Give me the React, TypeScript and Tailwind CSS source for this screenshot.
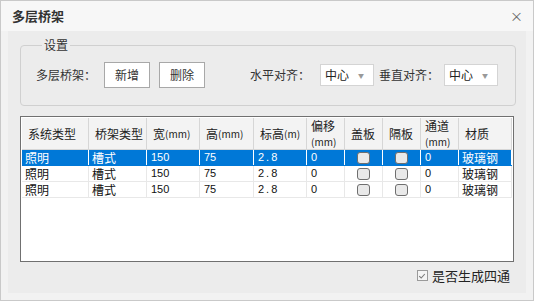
import React from "react"

const font = { fontFamily: '"Noto Sans CJK SC", "Noto Sans", sans-serif' }

type Row = { sys: string; tray: string; w: string; h: string; elev: string; offset: string; ch: string; mat: string }

const rows: Row[] = [
  { sys: "照明", tray: "槽式", w: "150", h: "75", elev: "2.8", offset: "0", ch: "0", mat: "玻璃钢" },
  { sys: "照明", tray: "槽式", w: "150", h: "75", elev: "2.8", offset: "0", ch: "0", mat: "玻璃钢" },
  { sys: "照明", tray: "槽式", w: "150", h: "75", elev: "2.8", offset: "0", ch: "0", mat: "玻璃钢" },
]

const widths = ["w-[67px]", "w-[58px]", "w-[53px]", "w-[54px]", "w-[53px]", "w-[38px]", "w-[38px]", "w-[38px]", "w-[38px]", "w-[53px]"]

function Mm() {
  return <span className="text-[10px]">(mm)</span>
}

function CellBox() {
  return <span className="block w-[13px] h-[12px] rounded-[3px] border border-[#6e6e6e] bg-[#e9e9e9]" />
}

function Dropdown() {
  return (
    <div className="w-[54px] h-[22px] bg-white border border-[#d4d4d4] flex items-center justify-between pl-[4px] pr-[9px] text-[12px] text-[#222]">
      <span>中心</span>
      <span className="text-[6px] text-[#999]">▼</span>
    </div>
  )
}

export default function App() {
  const headers: React.ReactNode[] = [
    "系统类型",
    "桥架类型",
    <>宽<Mm /></>,
    <>高<Mm /></>,
    <>标高<span className="text-[10px]">(m)</span></>,
    <span className="leading-[15px] block">偏移<br /><Mm /></span>,
    "盖板",
    "隔板",
    <span className="leading-[15px] block">通道<br /><Mm /></span>,
    "材质",
  ]

  return (
    <div style={font} className="w-[534px] h-[301px] border border-[#c9c9c9] bg-[#f2f2f2] flex flex-col text-[#222]">
      {/* Title bar */}
      <div className="h-[30px] bg-[#f7f7f7] flex items-center justify-between pl-[11px] pr-[10px] shrink-0">
        <span className="text-[13px] font-bold text-[#333]">多层桥架</span>
        <span className="text-[13px] text-[#666]">×</span>
      </div>

      {/* Body */}
      <div className="flex-1 px-[7px] pb-[7px]">
        <div className="h-full bg-[#ececec] pl-[12px] pr-[10px] pt-[7px] flex flex-col">
          {/* Settings group */}
          <fieldset className="border border-[#d0d0d0] rounded-[4px] h-[68px] px-[15px]">
            <legend className="ml-[6px] px-[2px] text-[12px] text-[#333] leading-[14px]">设置</legend>
            <div className="flex items-center h-[46px] text-[12px] text-[#333]">
              <span className="w-[68px]">多层桥架：</span>
              <button className="w-[46px] h-[26px] bg-white border border-[#a8a8a8] text-[12px]">新增</button>
              <button className="ml-[9px] w-[46px] h-[26px] bg-white border border-[#a8a8a8] text-[12px]">删除</button>
              <span className="ml-[45px] w-[70px]">水平对齐：</span>
              <Dropdown />
              <span className="ml-[5px] w-[65px]">垂直对齐：</span>
              <Dropdown />
            </div>
          </fieldset>

          {/* Table */}
          <div className="mt-[10px] h-[146px] border border-[#707070] bg-white p-[1px] w-[494px]">
            <div className="flex h-[32px] bg-[#f3f3f3] border-b border-[#d6d6d6] text-[12px] text-[#222]">
              {headers.map((h, i) => (
                <div key={i} className={`${widths[i]} shrink-0 border-r border-[#d6d6d6] flex items-center ${i === 5 || i === 8 ? "pl-[4px]" : "pl-[6px]"}`}>
                  {h}
                </div>
              ))}
            </div>
            {rows.map((r, ri) => {
              const sel = ri === 0
              const cells: React.ReactNode[] = [r.sys, r.tray, r.w, r.h, r.elev, r.offset, <CellBox />, <CellBox />, r.ch, r.mat]
              return (
                <div key={ri} className={`flex h-[16px] border-b ${sel ? "bg-[#0078d7] text-white border-[#0078d7]" : "text-[#111] border-[#e8e8e8]"}`}>
                  {cells.map((c, ci) => (
                    <div
                      key={ci}
                      className={`${widths[ci]} shrink-0 border-r ${sel ? "border-white" : "border-[#e8e8e8]"} flex items-center leading-[15px] ${ci === 6 || ci === 7 ? "justify-center" : ci < 2 || ci === 9 ? "pl-[3px] text-[12px]" : "pl-[4px] text-[11px]"} ${ci === 4 ? "tracking-[2px]" : ""}`}
                      style={{ fontFamily: ci >= 2 && ci !== 6 && ci !== 7 && ci !== 9 ? '"Liberation Sans", sans-serif' : undefined }}
                    >
                      {c}
                    </div>
                  ))}
                </div>
              )
            })}
          </div>

          {/* Four-way option */}
          <div className="flex justify-end items-center mt-[4px] pr-[6px] gap-[4px] text-[13px] text-[#222]">
            <span className="w-[11px] h-[11px] border border-[#9a9a9a] bg-[#f4f4f4] flex items-center justify-center">
              <svg viewBox="0 0 10 10" className="w-[8px] h-[8px]">
                <path d="M1.5 5.2 L4 7.5 L8.5 2.5" stroke="#7a7a7a" strokeWidth="1.4" fill="none" />
              </svg>
            </span>
            <span>是否生成四通</span>
          </div>
        </div>
      </div>
    </div>
  )
}
